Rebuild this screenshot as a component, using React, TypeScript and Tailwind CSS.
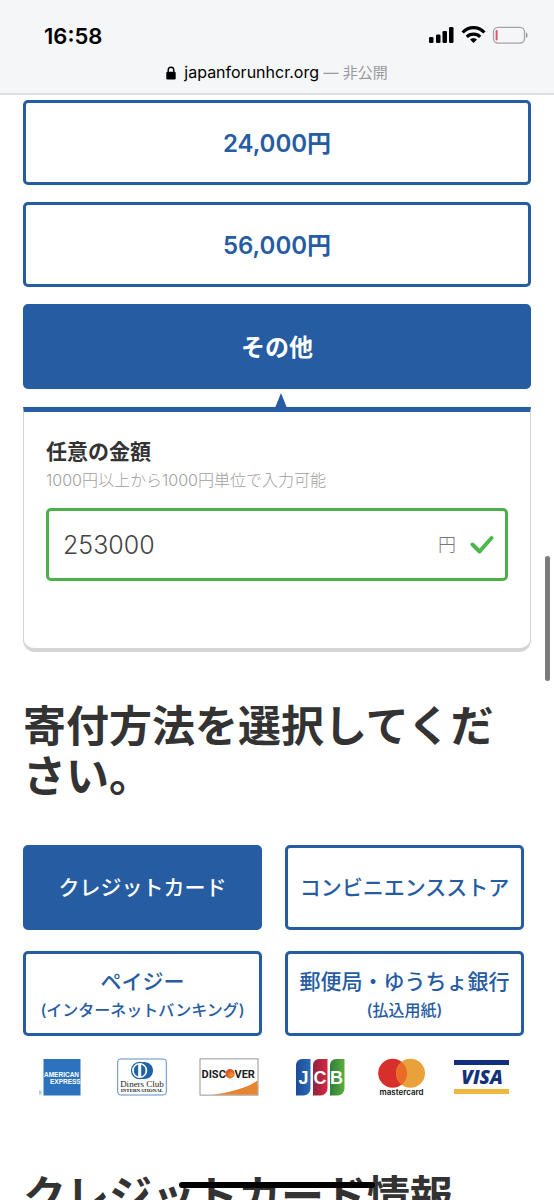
import React, { useState } from 'react';
import clsx from 'clsx';

const amounts = ['24,000円', '56,000円', 'その他'];

const methods = [
  { id: 'card', label: 'クレジットカード' },
  { id: 'store', label: 'コンビニエンスストア' },
  { id: 'payeasy', label: 'ペイジー', note: '(インターネットバンキング)' },
  { id: 'post', label: '郵便局・ゆうちょ銀行', note: '(払込用紙)' },
];

const StatusIcons: React.FC = () => (
  <svg className="h-5 w-[100px]" viewBox="0 0 100 20" role="img" aria-label="電波、Wi-Fi、バッテリー残量">
    <rect x="1" y="11" width="4.500" height="6" rx="1.3" />
    <rect x="8" y="8.500" width="4.500" height="8.500" rx="1.3" />
    <rect x="14.5" y="5" width="4.500" height="12" rx="1.3" />
    <rect x="21" y="1" width="4.500" height="16" rx="1.3" />
    <g fill="none" stroke="#000" strokeWidth="3.2">
      <path d="M34.600 6.500C40.800 0 50.200 0 56.400 6.500" />
      <path d="M38.800 10.800C42.400 7.200 48.600 7.200 52.200 10.800" />
    </g>
    <path d="M42 13.600c2-1.900 5-1.900 7 0L45.500 17z" />
    <rect x="65.500" y="1.300" width="31" height="15.800" rx="4.500" fill="none" stroke="#a3a3a5" strokeWidth="1.300" />
    <rect x="67.600" y="4" width="2" height="10.500" rx="1" fill="#e0555f" />
    <path d="M98 6.500c2 .8 2 4.700 0 5.500z" fill="#8f8f92" />
  </svg>
);

const LockIcon: React.FC = () => (
  <svg className="h-[14px] w-[10px]" viewBox="0 0 10 14" aria-hidden="true">
    <rect x="0.300" y="5.800" width="9.400" height="7.700" rx="1.200" />
    <path d="M2.200 6.500V4a2.800 2.800 0 0 1 5.600 0v2.500" fill="none" stroke="#000" strokeWidth="1.400" />
  </svg>
);

const CardLogos: React.FC = () => (
  <div className="mt-[22px] flex justify-between pr-[15px] pl-4">
    <svg className="h-[38px] w-[49px]" viewBox="0 0 49 38" role="img" aria-label="American Express">
      <rect x="4.500" y="1" width="37" height="36.500" fill="#2c72bd" />
      <g fontFamily="Liberation Sans" fontWeight="700" fontSize="6.500" fill="#fff">
        <text x="5" y="18.800">AMERICAN</text>
        <text x="11" y="26">EXPRESS</text>
      </g>
      <text x="-1" y="37" fontFamily="Liberation Sans" fontSize="5" fill="#2c72bd">®</text>
    </svg>
    <svg className="h-[38px] w-[53px]" viewBox="0 0 53 38" role="img" aria-label="Diners Club International">
      <rect x="0.700" y="1" width="48.600" height="36" rx="3" fill="#fff" stroke="#5b8fc4" />
      <path d="M23 4h4c5 0 9 3.500 9 8.500S32 21 27 21h-4z" fill="#1f62a8" />
      <circle cx="22.700" cy="12.500" r="8.200" fill="#fff" stroke="#1f62a8" strokeWidth="1.200" />
      <path d="M21.200 6.600a6.200 6.200 0 0 0 0 11.800zM24.200 6.600a6.200 6.200 0 0 1 0 11.800z" fill="#1f62a8" />
      <g fontFamily="Liberation Serif" fill="#222" textAnchor="middle">
        <text x="25" y="28.500" fontSize="9">Diners Club</text>
        <text x="25" y="34" fontSize="5" fontWeight="700">INTERNATIONAL</text>
      </g>
    </svg>
    <svg className="h-[38px] w-[67px]" viewBox="0 0 67 38" role="img" aria-label="Discover">
      <defs>
        <radialGradient id="discoverBall" cx="0.650" cy="0.650">
          <stop offset="0" stopColor="#f39a2f" />
          <stop offset="1" stopColor="#df5828" />
        </radialGradient>
      </defs>
      <rect x="1" y="0.900" width="58" height="36.200" fill="#fff" stroke="#7d7d7d" strokeWidth="0.800" />
      <path d="M58.600 22.500v14.200H13.500C32 34.500 48 30 58.600 22.500z" fill="#e58432" />
      <g fontFamily="Roboto" fontWeight="700" fontSize="11" fill="#1c1c1c">
        <text x="2.500" y="19.800">DISC</text>
        <text x="35.500" y="19.800">VER</text>
      </g>
      <circle cx="31" cy="15.800" r="4.700" fill="url(#discoverBall)" />
    </svg>
    <svg className="h-[38px] w-[54px]" viewBox="0 0 54 38" role="img" aria-label="JCB">
      <defs>
        <linearGradient id="jcbBlue">
          <stop offset="0" stopColor="#1d4b98" />
          <stop offset="1" stopColor="#2a6ab5" />
        </linearGradient>
        <linearGradient id="jcbRed">
          <stop offset="0" stopColor="#8f2440" />
          <stop offset="1" stopColor="#d5283f" />
        </linearGradient>
        <linearGradient id="jcbGreen">
          <stop offset="0" stopColor="#2f7f3b" />
          <stop offset="1" stopColor="#5cad3d" />
        </linearGradient>
      </defs>
      <path d="M7 1h8.500v29.500a7 7 0 0 1-7 7H1V7a6 6 0 0 1 6-6z" fill="url(#jcbBlue)" />
      <path d="M24 1h8.500v29.500a7 7 0 0 1-7 7H18V7a6 6 0 0 1 6-6z" fill="url(#jcbRed)" />
      <path d="M41 1h8.500v29.500a7 7 0 0 1-7 7H35V7a6 6 0 0 1 6-6z" fill="url(#jcbGreen)" />
      <g fontFamily="Liberation Sans" fontWeight="700" fontSize="18" fill="#fff" textAnchor="middle">
        <text x="8.500" y="25.500">J</text>
        <text x="25" y="25.500">C</text>
        <text x="41.500" y="25.500">B</text>
      </g>
    </svg>
    <svg className="h-[38px] w-[47px]" viewBox="0 0 47 38" role="img" aria-label="Mastercard">
      <circle cx="14.700" cy="15.300" r="14.500" fill="#d72f2c" />
      <circle cx="32.500" cy="15.300" r="14.500" fill="#e9a23b" />
      <path d="M23.600 3.900a14.500 14.500 0 0 1 0 22.800a14.500 14.500 0 0 1 0-22.800z" fill="#ea6a27" />
      <text x="23.500" y="36.500" fontFamily="Inter" fontWeight="600" fontSize="8" fill="#111" textAnchor="middle">
        mastercard
      </text>
    </svg>
    <svg className="h-[38px] w-[55px]" viewBox="0 0 55 38" role="img" aria-label="Visa">
      <rect x="0" y="2" width="55" height="5" fill="#0f2f7c" />
      <rect x="0" y="31" width="55" height="5" fill="#eeb83c" />
      <text x="28" y="25.500" fontFamily="Open Sans" fontWeight="800" fontStyle="italic" fontSize="19" fill="#12307c" textAnchor="middle">
        VISA
      </text>
    </svg>
  </div>
);

const App: React.FC = () => {
  const [amount, setAmount] = useState('その他');
  const [method, setMethod] = useState('card');
  const [custom, setCustom] = useState('253000');

  return (
    <div className="relative flex h-screen flex-col overflow-hidden bg-white font-['Inter','Noto_Sans_CJK_JP',sans-serif] text-[#333]">
      <header className="shrink-0 border-b-2 border-[#dfe0e2] bg-[#f5f6f8] pt-6 text-black">
        <div className="flex items-center justify-between pr-[26px] pl-11">
          <span className="text-[22px] leading-6 font-semibold">16:58</span>
          <StatusIcons />
        </div>
        <div className="mt-3 flex items-center justify-center gap-2 pb-2 text-[16px] leading-6">
          <LockIcon />
          <p>
            japanforunhcr.org <span className="text-[15px] text-[#9a9a9d]">— 非公開</span>
          </p>
        </div>
      </header>

      <main className="min-h-0 flex-1 overflow-hidden px-[23px] pt-[5px]">
        <div className="flex flex-col gap-[17px]">
          {amounts.map((item) => (
            <button
              key={item}
              type="button"
              aria-pressed={amount === item}
              onClick={() => setAmount(item)}
              className={clsx(
                'h-[85px] w-full rounded-[5px] border-3 border-[#265ca2] pt-[2px] text-[24px] leading-8 font-semibold',
                amount === item ? 'bg-[#265ca2] text-white' : 'bg-white text-[#265ca2]',
              )}
            >
              {item}
            </button>
          ))}
        </div>

        <section className="relative mt-[18px] rounded-b-[12px] border-x border-t-5 border-b-4 border-x-[#d4d4d4] border-t-[#265ca2] border-b-[#d4d4d4] px-[22px] pt-6 pb-[67px]">
          <svg className="absolute -top-[19px] left-1/2 -ml-0.5 h-[15px] w-3" viewBox="0 0 12 15" aria-hidden="true">
            <path d="M6 0l6 15H0z" fill="#265ca2" />
          </svg>
          <label htmlFor="amount" className="block text-[21px] leading-8 font-semibold">
            任意の金額
          </label>
          <p id="amount-hint" className="text-[16px] leading-6 font-light text-[#a0a0a0]">
            1000円以上から1000円単位で入力可能
          </p>
          <div className="mt-4 flex h-[73px] items-center rounded-[5px] border-3 border-[#4caf4b] pr-[11px] pl-[14px]">
            <input
              id="amount"
              inputMode="numeric"
              aria-describedby="amount-hint"
              value={custom}
              onChange={(e) => setCustom(e.target.value)}
              className="min-w-0 flex-1 bg-transparent text-[25px] leading-8 font-light text-[#444] outline-none"
            />
            <span className="text-[18px] leading-6 font-light text-[#777]">円</span>
            <svg className="ml-[14px] h-5 w-6" viewBox="0 0 24 20" aria-hidden="true">
              <path d="M2.500 9.500l7 7L21.500 3" fill="none" stroke="#4db64c" strokeWidth="4" strokeLinecap="round" strokeLinejoin="round" />
            </svg>
          </div>
        </section>

        <div className="pr-[7px]">
          <h2 className="mt-[49px] text-[43px] leading-[50px] font-semibold">寄付方法を選択してください。</h2>

          <div className="mt-11 grid grid-cols-2 gap-x-[23px] gap-y-[21px]">
            {methods.map((item) => (
              <button
                key={item.id}
                type="button"
                aria-pressed={method === item.id}
                onClick={() => setMethod(item.id)}
                className={clsx(
                  'flex h-[85px] flex-col items-center justify-center rounded-[5px] border-3 border-[#265ca2] font-medium whitespace-nowrap',
                  method === item.id ? 'bg-[#265ca2] text-white' : 'bg-white text-[#265ca2]',
                )}
              >
                <span className="text-[21px] leading-8">{item.label}</span>
                {item.note && <span className="text-[16px] leading-6">{item.note}</span>}
              </button>
            ))}
          </div>
          <CardLogos />

          <h2 className="mt-[75px] text-[43px] leading-[50px] font-semibold">クレジットカード情報</h2>
        </div>
      </main>

      {/* scroll thumb and home indicator float over the page */}
      <div className="absolute top-[556px] right-1 h-[125px] w-[5px] rounded-full bg-[#7b7b7b]" />
      <div className="absolute inset-x-0 bottom-3 flex justify-center">
        <div className="h-[6px] w-[196px] rounded-full bg-black" />
      </div>
    </div>
  );
};

export default App;
